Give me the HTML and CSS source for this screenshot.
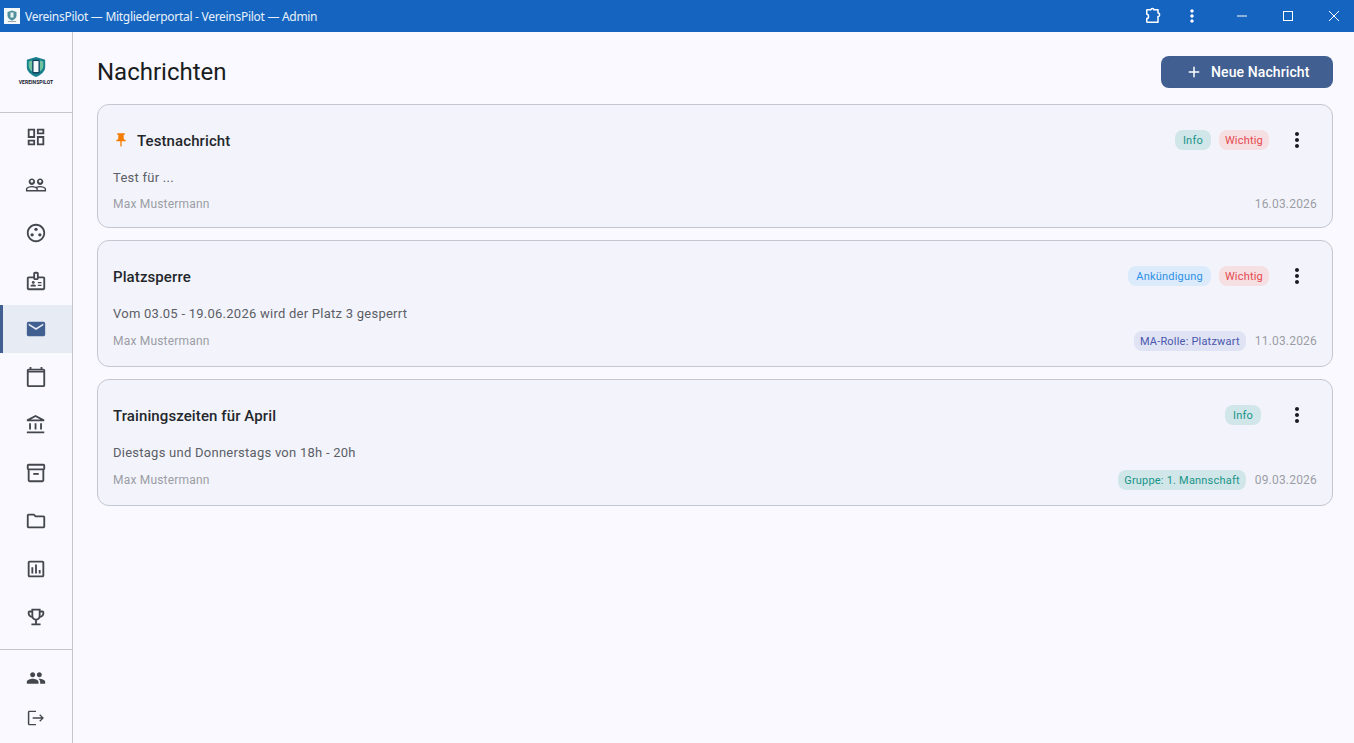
FILE: index.html
```html
<!DOCTYPE html>
<html lang="de">
<head>
    <meta charset="UTF-8">
    <title>VereinsPilot — Mitgliederportal - VereinsPilot — Admin</title>
    <link rel="stylesheet" href="styles.css">
</head>
<body>
<div class="titlebar">
    <div class="app-icon">
        <svg viewBox="0 0 16 16" width="16" height="16">
            <rect width="16" height="16" fill="#f4f7f8"/>
            <path d="M8 2.500l4.500 1.500v3.500c0 2.500-2 4-4.500 5-2.500-1-4.500-2.500-4.500-5V4z" fill="#4f8f9c"/>
            <rect x="6.500" y="4.500" width="3" height="5" fill="#e8f2f2"/>
            <rect x="4" y="13" width="8" height="1" fill="#9aa6ab"/>
        </svg>
    </div>
    <div class="titlebar-text">VereinsPilot — Mitgliederportal - VereinsPilot — Admin</div>
    <div class="titlebar-tools">
        <button class="tool-btn ext-btn">
            <svg viewBox="0 0 24 24" width="20" height="20"><path d="M5 4.500h4.500c0-2.200 3.500-2.200 3.500 0H18v4c2.500-.3 2.500 4.300 0 4V19.500H5.500c-.8 0-1-.5-1-1V15c2.800 0 2.800-5 0-5V5c0-.3.2-.5.500-.5z" fill="none" stroke="#fff" stroke-width="1.800" stroke-linejoin="round"/></svg>
        </button>
        <button class="tool-btn dots-btn">
            <svg viewBox="0 0 24 24" width="20" height="20"><path fill="#fff" d="M12 8c1.100 0 2-.9 2-2s-.9-2-2-2-2 .9-2 2 .9 2 2 2zm0 2c-1.100 0-2 .9-2 2s.9 2 2 2 2-.9 2-2-.9-2-2-2zm0 6c-1.100 0-2 .9-2 2s.9 2 2 2 2-.9 2-2-.9-2-2-2z"/></svg>
        </button>
        <button class="win-btn">
            <svg viewBox="0 0 10 10" width="10" height="10"><path d="M0 5h10" stroke="#fff" stroke-width="1"/></svg>
        </button>
        <button class="win-btn">
            <svg viewBox="0 0 10 10" width="10" height="10"><rect x=".5" y=".5" width="9" height="9" fill="none" stroke="#fff" stroke-width="1"/></svg>
        </button>
        <button class="win-btn">
            <svg viewBox="0 0 10 10" width="10" height="10"><path d="M0 0l10 10M10 0L0 10" stroke="#fff" stroke-width="1"/></svg>
        </button>
    </div>
</div>

<div class="app">
    <nav class="sidebar">
        <div class="logo">
            <svg viewBox="0 0 24 24" width="22" height="22">
                <path d="M12 1l10 3v8c0 5-4.500 8.500-10 11C6.500 20.500 2 17 2 12V4z" fill="#16808c"/>
                <path d="M4 6l4-1.500v12.500C5.500 15.500 4 13.500 4 11zM20 6l-4-1.500v12.500c2.500-1.500 4-3.500 4-6z" fill="#6fc3a0"/>
                <rect x="8" y="4" width="8" height="15" rx="1.500" fill="#123f5c"/>
                <rect x="9.300" y="5.500" width="5.400" height="12" fill="#f4fbfd"/>
            </svg>
            <span class="logo-text">VEREINSPILOT</span>
        </div>
        <div class="nav-main">
            <a class="nav-item"><svg class="icon" viewBox="0 0 24 24"><path d="M19 5v2h-4V5h4M9 5v6H5V5h4m10 8v6h-4v-6h4M9 17v2H5v-2h4M21 3h-8v6h8V3zM11 3H3v10h8V3zm10 8h-8v10h8V11zm-10 4H3v6h8v-6z"/></svg></a>
            <a class="nav-item"><svg class="icon" viewBox="0 0 24 24"><path d="M16.500 13c-1.200 0-3.070.34-4.500 1-1.430-.67-3.300-1-4.500-1C5.330 13 1 14.080 1 16.250V19h22v-2.750c0-2.170-4.330-3.250-6.500-3.250zm-4 4.500h-10v-1.250c0-.54 2.560-1.750 5-1.750s5 1.210 5 1.750v1.250zm9 0H14v-1.250c0-.46-.2-.86-.52-1.220.88-.3 1.960-.53 3.020-.53 2.440 0 5 1.210 5 1.750v1.250zM7.500 12c1.930 0 3.500-1.570 3.500-3.500S9.430 5 7.500 5 4 6.570 4 8.500 5.570 12 7.500 12zm0-5.500c.83 0 1.500.67 1.500 1.500s-.67 1.500-1.500 1.500S6 8.830 6 8s.67-1.500 1.500-1.500zm9 5.500c1.930 0 3.500-1.570 3.500-3.500S18.430 5 16.500 5 13 6.570 13 8.500s1.570 3.500 3.500 3.500zm0-5.500c.83 0 1.500.67 1.500 1.500s-.67 1.500-1.500 1.500S15 8.830 15 8s.67-1.500 1.500-1.500z"/></svg></a>
            <a class="nav-item"><svg class="icon" viewBox="0 0 24 24"><path d="M12 2C6.480 2 2 6.480 2 12s4.480 10 10 10 10-4.480 10-10S17.520 2 12 2zm0 18c-4.410 0-8-3.590-8-8s3.590-8 8-8 8 3.590 8 8-3.590 8-8 8z"/><circle cx="12" cy="8" r="1.800"/><circle cx="7.800" cy="14" r="1.800"/><circle cx="16.200" cy="14" r="1.800"/></svg></a>
            <a class="nav-item"><svg class="icon" viewBox="0 0 24 24"><path d="M20 7h-5V4c0-1.100-.9-2-2-2h-2c-1.100 0-2 .9-2 2v3H4c-1.100 0-2 .9-2 2v11c0 1.100.9 2 2 2h16c1.100 0 2-.9 2-2V9c0-1.100-.9-2-2-2zM11 4h2v5h-2V4zm9 16H4V9h5c0 1.100.9 2 2 2h2c1.100 0 2-.9 2-2h5v11z"/><circle cx="9" cy="13.500" r="1.500"/><path d="M6 18v-.6c0-1 2-1.500 3-1.500s3 .5 3 1.500v.6zM14 13h4v1.500h-4zM14 16h4v1.500h-4z"/></svg></a>
            <a class="nav-item active"><svg class="icon" viewBox="0 0 24 24"><path d="M20 4H4c-1.100 0-1.990.9-1.990 2L2 18c0 1.100.9 2 2 2h16c1.100 0 2-.9 2-2V6c0-1.100-.9-2-2-2zm0 4l-8 5-8-5V6l8 5 8-5v2z"/></svg></a>
            <a class="nav-item"><svg class="icon" viewBox="0 0 24 24"><path fill-rule="evenodd" d="M20 3h-1V1h-2v2H7V1H5v2H4c-1.100 0-2 .9-2 2v16c0 1.100.9 2 2 2h16c1.100 0 2-.9 2-2V5c0-1.100-.9-2-2-2zm0 18H4V7h16v14zM4 5.500V5h16v.5z"/></svg></a>
            <a class="nav-item"><svg class="icon" viewBox="0 0 24 24"><path d="M6.500 10h-2v7h2v-7zm6 0h-2v7h2v-7zm8.500 9H2v2h19v-2zm-2.500-9h-2v7h2v-7zm-7-6.740L16.710 6H6.290l5.210-2.740m0-2.260L2 6v2h19V6l-9.500-5z"/></svg></a>
            <a class="nav-item"><svg class="icon" viewBox="0 0 24 24"><path d="M20 2H4c-1 0-2 .9-2 2v3.010c0 .72.43 1.340 1 1.690V20c0 1.100 1.100 2 2 2h14c.9 0 2-.9 2-2V8.700c.57-.35 1-.97 1-1.690V4c0-1.100-1-2-2-2zm-1 18H5V9h14v11zm1-13H4V4h16v3z"/><path d="M9 12h6v2H9z"/></svg></a>
            <a class="nav-item"><svg class="icon" viewBox="0 0 24 24"><path d="M9.170 6l2 2H20v10H4V6h5.170M10 4H4c-1.100 0-1.990.9-1.990 2L2 18c0 1.100.9 2 2 2h16c1.100 0 2-.9 2-2V8c0-1.100-.9-2-2-2h-8l-2-2z"/></svg></a>
            <a class="nav-item"><svg class="icon" viewBox="0 0 24 24"><path d="M19 3H5c-1.100 0-2 .9-2 2v14c0 1.100.9 2 2 2h14c1.100 0 2-.9 2-2V5c0-1.100-.9-2-2-2zm0 16H5V5h14v14zM7 10h2v7H7zm4-3h2v10h-2zm4 6h2v4h-2z"/></svg></a>
            <a class="nav-item"><svg class="icon" viewBox="0 0 24 24"><path d="M19 5h-2V3H7v2H5c-1.100 0-2 .9-2 2v1c0 2.550 1.920 4.630 4.390 4.940.63 1.500 1.980 2.630 3.610 2.960V19H7v2h10v-2h-4v-3.100c1.630-.33 2.980-1.460 3.610-2.960C19.080 12.630 21 10.550 21 8V7c0-1.100-.9-2-2-2zM5 8V7h2v3.820C5.840 10.400 5 9.300 5 8zm7 6c-1.650 0-3-1.350-3-3V5h6v6c0 1.650-1.350 3-3 3zm7-6c0 1.300-.84 2.400-2 2.820V7h2v1z"/></svg></a>
        </div>
        <div class="nav-bottom">
            <a class="nav-item small"><svg class="icon" viewBox="0 0 24 24"><path d="M16 11c1.660 0 2.990-1.340 2.990-3S17.660 5 16 5c-1.660 0-3 1.340-3 3s1.340 3 3 3zm-8 0c1.660 0 2.990-1.340 2.990-3S9.660 5 8 5C6.340 5 5 6.340 5 8s1.340 3 3 3zm0 2c-2.330 0-7 1.170-7 3.500V19h14v-2.500c0-2.330-4.670-3.500-7-3.500zm8 0c-.29 0-.62.02-.97.05 1.160.84 1.970 1.970 1.970 3.450V19h6v-2.500c0-2.330-4.670-3.500-7-3.500z"/></svg></a>
            <a class="nav-item small"><svg class="icon" viewBox="0 0 24 24"><path d="M17 7.500l-1.100 1.100L18.500 11.200H8v1.600h10.500l-2.600 2.600 1.100 1.100 4.500-4.500zM4 4.800h8V3.200H4c-1 0-1.800.8-1.800 1.800v14c0 1 .8 1.800 1.800 1.800h8v-1.600H4V4.800z"/></svg></a>
        </div>
    </nav>

    <main class="content">
        <div class="page-header">
            <h1>Nachrichten</h1>
            <button class="btn-new">
                <svg viewBox="0 0 24 24" width="18" height="18"><path fill="#fff" d="M19 13h-6v6h-2v-6H5v-2h6V5h2v6h6v2z"/></svg>
                Neue Nachricht
            </button>
        </div>

        <div class="message-list">
            <div class="message-card">
                <div class="card-head">
                    <svg class="pin" viewBox="0 0 24 24"><path d="M16 9V4h1c.55 0 1-.45 1-1s-.45-1-1-1H7c-.55 0-1 .45-1 1s.45 1 1 1h1v5c0 1.660-1.340 3-3 3v2h5.970v7l1 1 1-1v-7H19v-2c-1.660 0-3-1.340-3-3z"/></svg>
                    <div class="card-title">Testnachricht</div>
                    <div class="chips">
                        <span class="chip chip-info">Info</span>
                        <span class="chip chip-important">Wichtig</span>
                    </div>
                    <button class="more-btn"><svg viewBox="0 0 24 24" width="24" height="24"><path d="M12 8c1.100 0 2-.9 2-2s-.9-2-2-2-2 .9-2 2 .9 2 2 2zm0 2c-1.100 0-2 .9-2 2s.9 2 2 2 2-.9 2-2-.9-2-2-2zm0 6c-1.100 0-2 .9-2 2s.9 2 2 2 2-.9 2-2-.9-2-2-2z"/></svg></button>
                </div>
                <div class="card-text">Test für ...</div>
                <div class="card-foot">
                    <span class="author">Max Mustermann</span>
                    <span class="date">16.03.2026</span>
                </div>
            </div>

            <div class="message-card">
                <div class="card-head">
                    <div class="card-title">Platzsperre</div>
                    <div class="chips">
                        <span class="chip chip-news">Ankündigung</span>
                        <span class="chip chip-important">Wichtig</span>
                    </div>
                    <button class="more-btn"><svg viewBox="0 0 24 24" width="24" height="24"><path d="M12 8c1.100 0 2-.9 2-2s-.9-2-2-2-2 .9-2 2 .9 2 2 2zm0 2c-1.100 0-2 .9-2 2s.9 2 2 2 2-.9 2-2-.9-2-2-2zm0 6c-1.100 0-2 .9-2 2s.9 2 2 2 2-.9 2-2-.9-2-2-2z"/></svg></button>
                </div>
                <div class="card-text">Vom 03.05 - 19.06.2026 wird der Platz 3 gesperrt</div>
                <div class="card-foot">
                    <span class="author">Max Mustermann</span>
                    <span class="chip chip-role">MA-Rolle: Platzwart</span>
                    <span class="date">11.03.2026</span>
                </div>
            </div>

            <div class="message-card">
                <div class="card-head">
                    <div class="card-title">Trainingszeiten für April</div>
                    <div class="chips solo">
                        <span class="chip chip-info">Info</span>
                    </div>
                    <button class="more-btn"><svg viewBox="0 0 24 24" width="24" height="24"><path d="M12 8c1.100 0 2-.9 2-2s-.9-2-2-2-2 .9-2 2 .9 2 2 2zm0 2c-1.100 0-2 .9-2 2s.9 2 2 2 2-.9 2-2-.9-2-2-2zm0 6c-1.100 0-2 .9-2 2s.9 2 2 2 2-.9 2-2-.9-2-2-2z"/></svg></button>
                </div>
                <div class="card-text">Diestags und Donnerstags von 18h - 20h</div>
                <div class="card-foot">
                    <span class="author">Max Mustermann</span>
                    <span class="chip chip-info">Gruppe: 1. Mannschaft</span>
                    <span class="date">09.03.2026</span>
                </div>
            </div>
        </div>
    </main>
</div>
</body>
</html>
```

FILE: styles.css
```css
* {
    box-sizing: border-box;
}
body {
    margin: 0;
    height: 743px;
    overflow: hidden;
    display: flex;
    flex-direction: column;
    font-family: Roboto, "Liberation Sans", sans-serif;
    background: #f9f9ff;
    color: #191c20;
}
button {
    border: none;
    background: none;
    padding: 0;
    font-family: inherit;
    cursor: pointer;
}
.titlebar {
    height: 32px;
    flex-shrink: 0;
    display: flex;
    align-items: center;
    background: #1565c0;
    color: #e8f1fb;
}
.app-icon {
    width: 16px;
    height: 16px;
    margin-left: 4px;
    margin-right: 5px;
}
.app-icon svg {
    display: block;
}
.titlebar-text {
    flex: 1;
    font-family: "Noto Sans", sans-serif;
    font-size: 12px;
    letter-spacing: -.29px;
}
.titlebar-tools {
    display: flex;
    align-items: center;
    margin-right: -3px;
}
.tool-btn {
    display: flex;
    align-items: center;
    justify-content: center;
    width: 40px;
    height: 32px;
}
.ext-btn {
    margin-right: -1px;
}
.dots-btn {
    margin-right: 7px;
}
.win-btn {
    display: flex;
    align-items: center;
    justify-content: center;
    width: 46px;
    height: 32px;
}
.app {
    flex: 1;
    display: flex;
    min-height: 0;
}
.sidebar {
    width: 73px;
    flex-shrink: 0;
    display: flex;
    flex-direction: column;
    border-right: 1px solid #c4c6d0;
}
.logo {
    height: 81px;
    display: flex;
    flex-direction: column;
    align-items: center;
    justify-content: center;
    border-bottom: 1px solid #c4c6d0;
    padding-bottom: 3px;
}
.logo-text {
    font-size: 5px;
    font-weight: 700;
    letter-spacing: .05px;
    color: #14202c;
    margin-top: 1px;
}
.nav-main {
    height: 537px;
    border-bottom: 1px solid #c4c6d0;
}
.nav-bottom {
    padding-top: 8px;
}
.nav-item {
    display: flex;
    align-items: center;
    justify-content: center;
    height: 48px;
}
.nav-item.small {
    height: 40px;
}
.nav-item .icon {
    width: 22px;
    height: 22px;
    fill: #44474e;
}
.nav-item.small .icon {
    width: 20px;
    height: 20px;
}
.nav-item.active {
    background: #e7ebf3;
    border-left: 3px solid #415f91;
    padding-right: 3px;
}
.nav-item.active .icon {
    fill: #415f91;
}
.content {
    flex: 1;
    padding: 24px 21px 0 24px;
    min-width: 0;
}
.page-header {
    display: flex;
    align-items: center;
    justify-content: space-between;
    height: 32px;
    margin-bottom: 16px;
}
h1 {
    margin: 0;
    font-size: 24px;
    font-weight: 400;
}
.btn-new {
    display: flex;
    align-items: center;
    gap: 8px;
    height: 32px;
    width: 172px;
    padding-left: 24px;
    border-radius: 8px;
    background: #415f91;
    color: #fff;
    font-size: 14px;
    font-weight: 500;
    letter-spacing: .1px;
}
.message-list {
    display: flex;
    flex-direction: column;
    gap: 12px;
}
.message-card {
    padding: 15px;
    border: 1px solid #c4c6d0;
    border-radius: 12px;
    background: #f3f4fb;
}
.card-head {
    display: flex;
    align-items: center;
    height: 40px;
}
.pin {
    width: 16px;
    height: 16px;
    margin-right: 8px;
    fill: #f57c00;
}
.card-title {
    flex: 1;
    padding-top: 1px;
    font-size: 15px;
    font-weight: 500;
    letter-spacing: .1px;
    color: #24272c;
}
.chips {
    display: flex;
    gap: 8px;
    margin-right: 8px;
}
.chips.solo {
    margin-right: 16px;
}
.chip {
    display: inline-flex;
    align-items: center;
    height: 20px;
    padding: 0 6px;
    border-radius: 8px;
    font-size: 11px;
    letter-spacing: .2px;
    white-space: nowrap;
}
.chips .chip-info,
.chips .chip-news {
    padding: 0 8px;
}
.chip-info {
    background: #d0e6e8;
    color: #1a9488;
}
.chip-important {
    background: #f6dfe3;
    color: #e5484d;
}
.chip-news {
    background: #dcebfb;
    color: #2f8fe6;
}
.chip-role {
    background: #e0e3f4;
    color: #4a58ad;
}
.more-btn {
    display: flex;
    align-items: center;
    justify-content: center;
    width: 40px;
    height: 40px;
    fill: #191c20;
}
.card-text {
    margin: 9px 0 8px;
    font-size: 13px;
    line-height: 18px;
    letter-spacing: .25px;
    color: #5b5e66;
}
.card-foot {
    display: flex;
    align-items: center;
    min-height: 17px;
    gap: 9px;
    font-size: 12px;
    letter-spacing: .2px;
    color: #9b9da5;
}
.author {
    flex: 1;
}
```
